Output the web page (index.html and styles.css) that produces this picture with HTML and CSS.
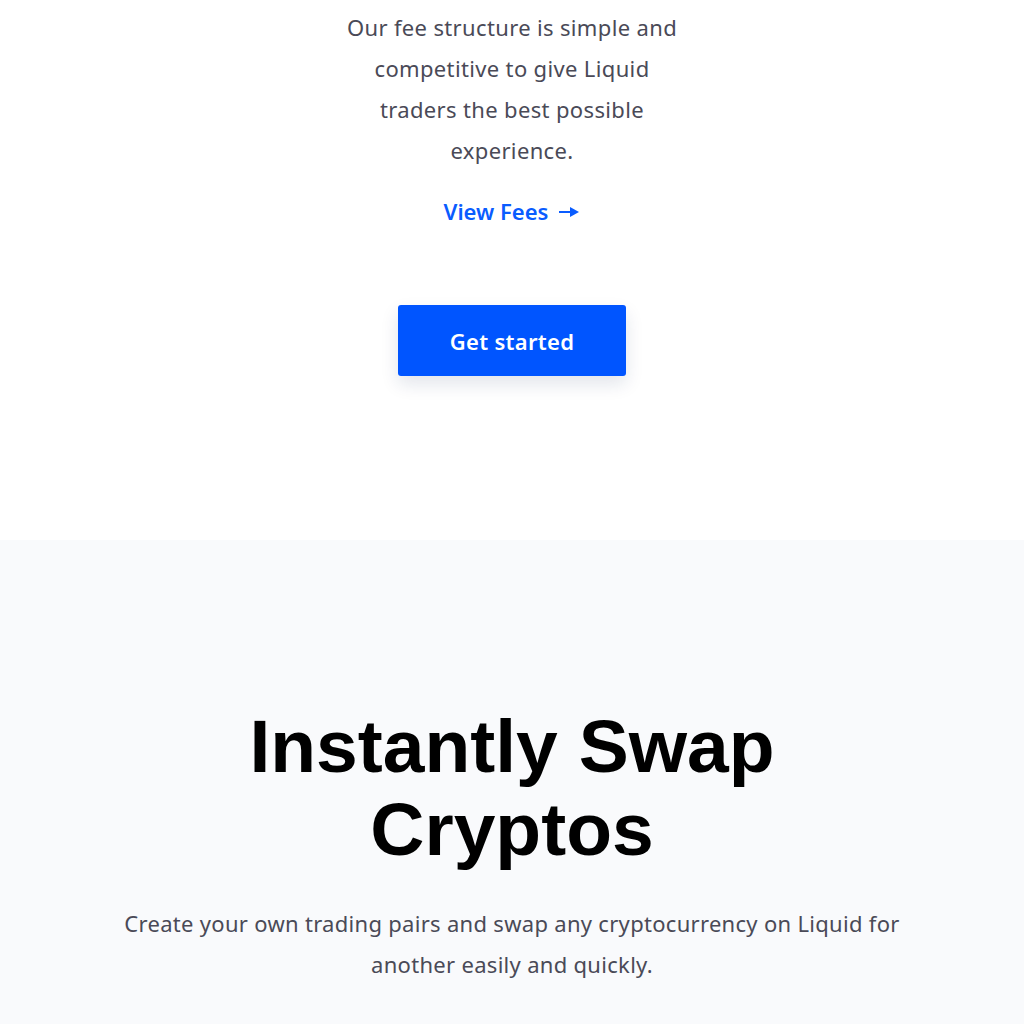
FILE: index.html
```html
<!DOCTYPE html>
<html lang="en">
<head>
  <meta charset="UTF-8">
  <meta name="viewport" content="width=device-width, initial-scale=1.0">
  <link rel="stylesheet" href="styles.css">
  <title>Liquid - Fees and Swap</title>
</head>
<body>
  <section class="fees">
    <p class="fees-text">Our fee structure is simple and competitive to give Liquid traders the best possible experience.</p>
    <a class="fees-link" href="#">View Fees
      <svg class="arrow" width="22" height="12" viewBox="0 0 22 12">
        <path d="M1 6h12" stroke="#0a5cff" stroke-width="2"/>
        <path d="M12 1l9 5-9 5z" fill="#0a5cff"/>
      </svg>
    </a>
    <a class="btn-start" href="#">Get started</a>
  </section>

  <section class="swap">
    <h2 class="swap-title">Instantly Swap<br>Cryptos</h2>
    <p class="swap-text">Create your own trading pairs and swap any cryptocurrency on Liquid for another easily and quickly.</p>
  </section>
</body>
</html>
```

FILE: styles.css
```css
body {
  margin: 0;
  font-family: "Noto Sans", "Open Sans", sans-serif;
  background: #fff;
}

.fees {
  display: flex;
  flex-direction: column;
  align-items: center;
  padding-top: 7px;
  height: 533px;
}

.fees-text {
  width: 340px;
  margin: 0;
  font-size: 22px;
  line-height: 41px;
  letter-spacing: 0.35px;
  color: #4a4a57;
  text-align: center;
}

.fees-link {
  display: flex;
  align-items: center;
  gap: 10px;
  margin-top: 25px;
  font-size: 22px;
  font-weight: 600;
  color: #0a5cff;
  text-decoration: none;
}

.arrow {
  margin-top: 2px;
}

.btn-start {
  display: flex;
  align-items: center;
  justify-content: center;
  width: 228px;
  height: 71px;
  margin-top: 79px;
  background: #0055ff;
  border-radius: 3px;
  box-shadow: 0 8px 18px rgba(20, 40, 90, 0.12);
  color: #fff;
  font-size: 22px;
  font-weight: 600;
  letter-spacing: 0.3px;
  text-decoration: none;
}

.swap {
  background: #f9fafc;
  padding: 165px 0 40px;
  text-align: center;
}

.swap-title {
  margin: 0;
  font-family: "Liberation Sans", Arial, sans-serif;
  font-size: 75px;
  line-height: 83px;
  font-weight: 700;
  color: #000;
}

.swap-text {
  width: 820px;
  margin: 32px auto 0;
  font-size: 22px;
  line-height: 41px;
  letter-spacing: 0.3px;
  color: #4a4a57;
}
```
